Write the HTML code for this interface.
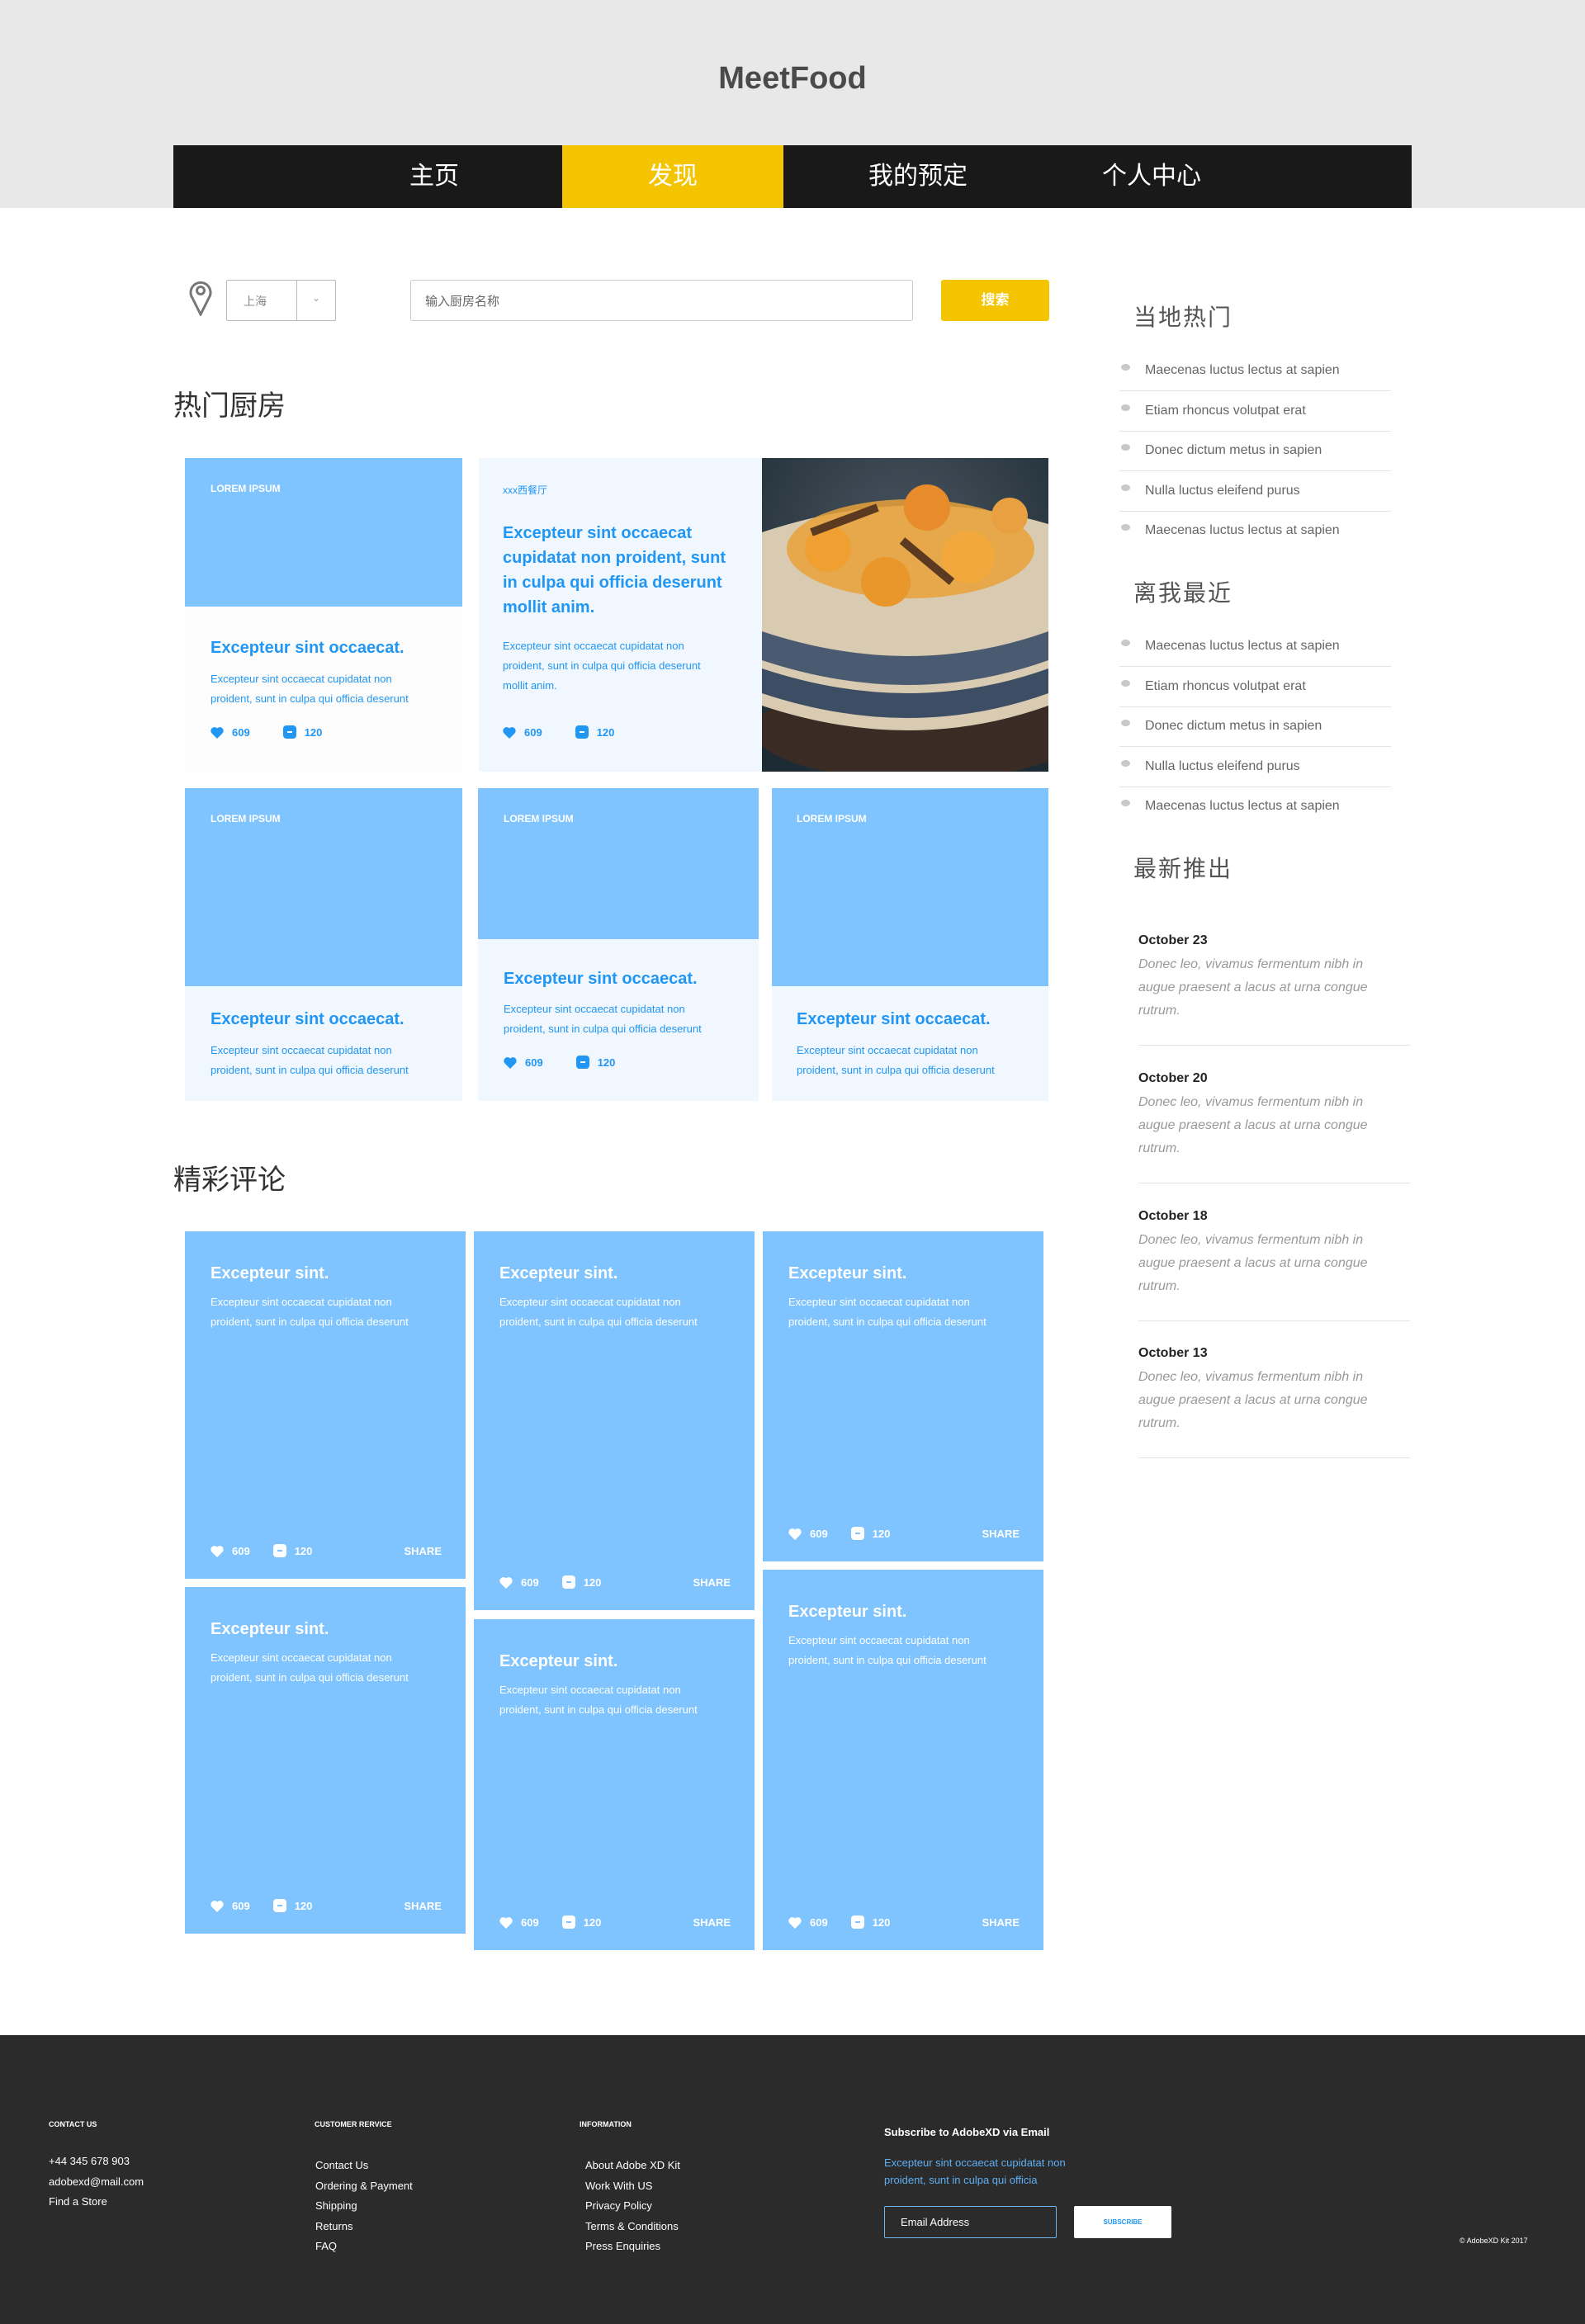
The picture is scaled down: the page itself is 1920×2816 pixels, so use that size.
<!DOCTYPE html>
<html><head><meta charset="utf-8"><style>
*{margin:0;padding:0;box-sizing:border-box}
body{width:1920px;height:2816px;position:relative;background:#fff;font-family:"Liberation Sans","Noto Sans CJK SC",sans-serif;overflow:hidden}
.a{position:absolute}
.hdr{left:0;top:0;width:1920px;height:252px;background:#e8e8e8}
.logo{left:0;width:1920px;top:74px;text-align:center;font-size:38px;font-weight:bold;color:#4a4a4a}
.nav{left:210px;top:176px;width:1500px;height:76px;background:#191919}
.nav span{position:absolute;top:0;height:76px;line-height:76px;color:#fff;font-size:30px;transform:translateX(-50%)}
.h2{font-size:34px;color:#333}
.card{background:#f0f7ff}
.blue{background:#7fc4fe}
.lab{color:#fff;font-size:12px;font-weight:bold}
.t{color:#2196f3;font-size:20px;font-weight:bold}
.d{color:#2196f3;font-size:13px;line-height:24px}
.st{color:#2196f3;font-size:13px;font-weight:bold;display:flex;align-items:center}
.st svg{margin-right:10px}
.rv{background:#7fc4fe}
.rv .t{color:#fff;position:absolute;left:31px;top:40px}
.rv .d{color:#fff;position:absolute;left:31px;top:74px;width:270px}
.rv .st{color:#fff;position:absolute;left:31px;bottom:26px;width:280px}
.rv .sh{margin-left:auto}
.side li{list-style:none;position:absolute;left:1356px;width:329px;height:49px;border-bottom:1px solid #e4e4e4;font-size:16px;color:#666}
.side li::before{content:"";position:absolute;left:2px;top:16px;width:11px;height:8px;border-radius:50%;background:#c8c8c8}
.side li span{position:absolute;left:31px;top:15px}
.news{left:1379px;width:329px;height:136px;border-bottom:1px solid #e4e4e4}
.news b{display:block;font-size:16px;color:#222}
.news i{display:block;font-size:16px;color:#999;line-height:28px;margin-top:6px;width:300px}
.ft{left:0;top:2466px;width:1920px;height:350px;background:#2b2b2b;color:#fff}
.fh{font-size:9px;font-weight:bold}
.fl{font-size:13px;line-height:24.5px}
</style></head><body>
<div class="a hdr"></div>
<div class="a logo">MeetFood</div>
<div class="a nav">
<div class="a" style="left:471px;top:0;width:268px;height:76px;background:#f5c400"></div>
<span style="left:316px">主页</span><span style="left:605px">发现</span><span style="left:902px">我的预定</span><span style="left:1185px">个人中心</span>
</div>

<!-- search -->
<svg class="a" style="left:229px;top:339px" width="28" height="44" viewBox="0 0 28 44"><path d="M14 42 L4 22 A12 12 0 1 1 24 22 Z" fill="none" stroke="#777" stroke-width="3"/><circle cx="14" cy="13" r="4.5" fill="none" stroke="#777" stroke-width="3"/></svg>
<div class="a" style="left:274px;top:339px;width:133px;height:50px;border:1px solid #bbb;border-radius:2px">
<div class="a" style="left:84px;top:0;width:1px;height:48px;background:#bbb"></div>
<span class="a" style="left:20px;top:15px;font-size:14px;color:#888">上海</span>
<span class="a" style="left:103px;top:14px;font-size:12px;color:#999">⌄</span></div>
<div class="a" style="left:497px;top:339px;width:609px;height:50px;border:1px solid #ccc;border-radius:3px"><span class="a" style="left:17px;top:14px;font-size:15px;color:#666">输入厨房名称</span></div>
<div class="a" style="left:1140px;top:339px;width:131px;height:50px;background:#f5c400;border-radius:3px;color:#fff;font-size:17px;font-weight:bold;text-align:center;line-height:50px">搜索</div>

<div class="a h2" style="left:210px;top:464px">热门厨房</div>

<!-- row1 -->
<div class="a" style="left:224px;top:555px;width:336px;height:380px;background:#fcfcfc"></div>
<div class="a blue" style="left:224px;top:555px;width:336px;height:180px"></div>
<div class="a lab" style="left:255px;top:585px">LOREM IPSUM</div>
<div class="a t" style="left:255px;top:774px">Excepteur sint occaecat.</div>
<div class="a d" style="left:255px;top:811px;width:270px">Excepteur sint occaecat cupidatat non proident, sunt in culpa qui officia deserunt</div>
<div class="a st" style="left:255px;top:879px"><svg width="16" height="15" viewBox="0 0 16 15"><path d="M8 15 L1.5 8.5 A4 4 0 0 1 8 2.5 A4 4 0 0 1 14.5 8.5 Z" fill="#2196f3"/></svg>609<svg style="margin-left:40px" width="16" height="16" viewBox="0 0 16 16"><rect width="16" height="16" rx="4" fill="#2196f3"/><rect x="5" y="7" width="6" height="2" fill="#fff"/></svg>120</div>

<div class="a card" style="left:580px;top:555px;width:353px;height:380px"></div>
<div class="a" style="left:609px;top:585px;font-size:12px;color:#2196f3">xxx西餐厅</div>
<div class="a t" style="left:609px;top:631px;width:285px;line-height:30px">Excepteur sint occaecat cupidatat non proident, sunt in culpa qui officia deserunt mollit anim.</div>
<div class="a d" style="left:609px;top:771px;width:270px">Excepteur sint occaecat cupidatat non proident, sunt in culpa qui officia deserunt mollit anim.</div>
<div class="a st" style="left:609px;top:879px"><svg width="16" height="15" viewBox="0 0 16 15"><path d="M8 15 L1.5 8.5 A4 4 0 0 1 8 2.5 A4 4 0 0 1 14.5 8.5 Z" fill="#2196f3"/></svg>609<svg style="margin-left:40px" width="16" height="16" viewBox="0 0 16 16"><rect width="16" height="16" rx="4" fill="#2196f3"/><rect x="5" y="7" width="6" height="2" fill="#fff"/></svg>120</div>

<svg class="a" style="left:923px;top:555px" width="347" height="380" viewBox="0 0 347 380">
<defs><radialGradient id="bg" cx="0.5" cy="0.3" r="0.8"><stop offset="0" stop-color="#4a5560"/><stop offset="1" stop-color="#1b2a33"/></radialGradient></defs>
<rect width="347" height="380" fill="url(#bg)"/>
<ellipse cx="190" cy="330" rx="200" ry="60" fill="#3a2c25"/>
<path d="M0 90 Q180 30 347 80 L347 300 Q180 360 0 300 Z" fill="#d9cbb1"/>
<path d="M0 210 Q180 270 347 210 L347 245 Q180 305 0 245 Z" fill="#4a5a70"/>
<path d="M0 255 Q180 315 347 255 L347 285 Q180 345 0 285 Z" fill="#3d4d63"/>
<ellipse cx="180" cy="110" rx="150" ry="60" fill="#e8a23a" opacity=".85"/>
<circle cx="80" cy="110" r="28" fill="#f0a030"/><circle cx="150" cy="150" r="30" fill="#e9962a"/><circle cx="250" cy="120" r="32" fill="#f2a83c"/><circle cx="200" cy="60" r="28" fill="#e88b2a"/><circle cx="300" cy="70" r="22" fill="#e8a040"/>
<path d="M60 90 L140 60 M170 100 L230 150" stroke="#5c3a22" stroke-width="10"/>
</svg>

<!-- row2 -->
<div class="a card" style="left:224px;top:955px;width:336px;height:379px"></div>
<div class="a blue" style="left:224px;top:955px;width:336px;height:240px"></div>
<div class="a lab" style="left:255px;top:985px">LOREM IPSUM</div>
<div class="a t" style="left:255px;top:1224px">Excepteur sint occaecat.</div>
<div class="a d" style="left:255px;top:1261px;width:270px">Excepteur sint occaecat cupidatat non proident, sunt in culpa qui officia deserunt</div>

<div class="a card" style="left:579px;top:955px;width:340px;height:379px"></div>
<div class="a blue" style="left:579px;top:955px;width:340px;height:183px"></div>
<div class="a lab" style="left:610px;top:985px">LOREM IPSUM</div>
<div class="a t" style="left:610px;top:1175px">Excepteur sint occaecat.</div>
<div class="a d" style="left:610px;top:1211px;width:270px">Excepteur sint occaecat cupidatat non proident, sunt in culpa qui officia deserunt</div>
<div class="a st" style="left:610px;top:1279px"><svg width="16" height="15" viewBox="0 0 16 15"><path d="M8 15 L1.5 8.5 A4 4 0 0 1 8 2.5 A4 4 0 0 1 14.5 8.5 Z" fill="#2196f3"/></svg>609<svg style="margin-left:40px" width="16" height="16" viewBox="0 0 16 16"><rect width="16" height="16" rx="4" fill="#2196f3"/><rect x="5" y="7" width="6" height="2" fill="#fff"/></svg>120</div>

<div class="a card" style="left:935px;top:955px;width:335px;height:379px"></div>
<div class="a blue" style="left:935px;top:955px;width:335px;height:240px"></div>
<div class="a lab" style="left:965px;top:985px">LOREM IPSUM</div>
<div class="a t" style="left:965px;top:1224px">Excepteur sint occaecat.</div>
<div class="a d" style="left:965px;top:1261px;width:270px">Excepteur sint occaecat cupidatat non proident, sunt in culpa qui officia deserunt</div>

<div class="a h2" style="left:210px;top:1402px">精彩评论</div>

<!-- reviews -->
<div class="a rv" style="left:224px;top:1492px;width:340px;height:421px"><div class="t">Excepteur sint.</div><div class="d">Excepteur sint occaecat cupidatat non proident, sunt in culpa qui officia deserunt</div><div class="st"><svg width="16" height="15" viewBox="0 0 16 15"><path d="M8 15 L1.5 8.5 A4 4 0 0 1 8 2.5 A4 4 0 0 1 14.5 8.5 Z" fill="#fff"/></svg>609<svg style="margin-left:28px" width="16" height="16" viewBox="0 0 16 16"><rect width="16" height="16" rx="4" fill="#fff"/><rect x="5" y="7" width="6" height="2" fill="#7fc4fe"/></svg>120<span class="sh">SHARE</span></div></div>
<div class="a rv" style="left:224px;top:1923px;width:340px;height:420px"><div class="t">Excepteur sint.</div><div class="d">Excepteur sint occaecat cupidatat non proident, sunt in culpa qui officia deserunt</div><div class="st"><svg width="16" height="15" viewBox="0 0 16 15"><path d="M8 15 L1.5 8.5 A4 4 0 0 1 8 2.5 A4 4 0 0 1 14.5 8.5 Z" fill="#fff"/></svg>609<svg style="margin-left:28px" width="16" height="16" viewBox="0 0 16 16"><rect width="16" height="16" rx="4" fill="#fff"/><rect x="5" y="7" width="6" height="2" fill="#7fc4fe"/></svg>120<span class="sh">SHARE</span></div></div>
<div class="a rv" style="left:574px;top:1492px;width:340px;height:459px"><div class="t">Excepteur sint.</div><div class="d">Excepteur sint occaecat cupidatat non proident, sunt in culpa qui officia deserunt</div><div class="st"><svg width="16" height="15" viewBox="0 0 16 15"><path d="M8 15 L1.5 8.5 A4 4 0 0 1 8 2.5 A4 4 0 0 1 14.5 8.5 Z" fill="#fff"/></svg>609<svg style="margin-left:28px" width="16" height="16" viewBox="0 0 16 16"><rect width="16" height="16" rx="4" fill="#fff"/><rect x="5" y="7" width="6" height="2" fill="#7fc4fe"/></svg>120<span class="sh">SHARE</span></div></div>
<div class="a rv" style="left:574px;top:1962px;width:340px;height:401px"><div class="t">Excepteur sint.</div><div class="d">Excepteur sint occaecat cupidatat non proident, sunt in culpa qui officia deserunt</div><div class="st"><svg width="16" height="15" viewBox="0 0 16 15"><path d="M8 15 L1.5 8.5 A4 4 0 0 1 8 2.5 A4 4 0 0 1 14.5 8.5 Z" fill="#fff"/></svg>609<svg style="margin-left:28px" width="16" height="16" viewBox="0 0 16 16"><rect width="16" height="16" rx="4" fill="#fff"/><rect x="5" y="7" width="6" height="2" fill="#7fc4fe"/></svg>120<span class="sh">SHARE</span></div></div>
<div class="a rv" style="left:924px;top:1492px;width:340px;height:400px"><div class="t">Excepteur sint.</div><div class="d">Excepteur sint occaecat cupidatat non proident, sunt in culpa qui officia deserunt</div><div class="st"><svg width="16" height="15" viewBox="0 0 16 15"><path d="M8 15 L1.5 8.5 A4 4 0 0 1 8 2.5 A4 4 0 0 1 14.5 8.5 Z" fill="#fff"/></svg>609<svg style="margin-left:28px" width="16" height="16" viewBox="0 0 16 16"><rect width="16" height="16" rx="4" fill="#fff"/><rect x="5" y="7" width="6" height="2" fill="#7fc4fe"/></svg>120<span class="sh">SHARE</span></div></div>
<div class="a rv" style="left:924px;top:1902px;width:340px;height:461px"><div class="t">Excepteur sint.</div><div class="d">Excepteur sint occaecat cupidatat non proident, sunt in culpa qui officia deserunt</div><div class="st"><svg width="16" height="15" viewBox="0 0 16 15"><path d="M8 15 L1.5 8.5 A4 4 0 0 1 8 2.5 A4 4 0 0 1 14.5 8.5 Z" fill="#fff"/></svg>609<svg style="margin-left:28px" width="16" height="16" viewBox="0 0 16 16"><rect width="16" height="16" rx="4" fill="#fff"/><rect x="5" y="7" width="6" height="2" fill="#7fc4fe"/></svg>120<span class="sh">SHARE</span></div></div>

<!-- sidebar -->
<div class="a" style="left:1373px;top:363px;font-size:28px;color:#555;letter-spacing:2px">当地热门</div>
<ul class="side">
<li style="top:425px"><span>Maecenas luctus lectus at sapien</span></li>
<li style="top:474px"><span>Etiam rhoncus volutpat erat</span></li>
<li style="top:522px"><span>Donec dictum metus in sapien</span></li>
<li style="top:571px"><span>Nulla luctus eleifend purus</span></li>
<li style="top:619px;border:none"><span>Maecenas luctus lectus at sapien</span></li>
</ul>
<div class="a" style="left:1373px;top:697px;font-size:28px;color:#555;letter-spacing:2px">离我最近</div>
<ul class="side">
<li style="top:759px"><span>Maecenas luctus lectus at sapien</span></li>
<li style="top:808px"><span>Etiam rhoncus volutpat erat</span></li>
<li style="top:856px"><span>Donec dictum metus in sapien</span></li>
<li style="top:905px"><span>Nulla luctus eleifend purus</span></li>
<li style="top:953px;border:none"><span>Maecenas luctus lectus at sapien</span></li>
</ul>
<div class="a" style="left:1373px;top:1031px;font-size:28px;color:#555;letter-spacing:2px">最新推出</div>
<div class="a news" style="top:1131px"><b>October 23</b><i>Donec leo, vivamus fermentum nibh in augue praesent a lacus at urna congue rutrum.</i></div>
<div class="a news" style="top:1298px"><b>October 20</b><i>Donec leo, vivamus fermentum nibh in augue praesent a lacus at urna congue rutrum.</i></div>
<div class="a news" style="top:1465px"><b>October 18</b><i>Donec leo, vivamus fermentum nibh in augue praesent a lacus at urna congue rutrum.</i></div>
<div class="a news" style="top:1631px"><b>October 13</b><i>Donec leo, vivamus fermentum nibh in augue praesent a lacus at urna congue rutrum.</i></div>

<!-- footer -->
<div class="a ft">
<div class="a fh" style="left:59px;top:103px">CONTACT US</div>
<div class="a fl" style="left:59px;top:141px">+44 345 678 903<br>adobexd@mail.com<br>Find a Store</div>
<div class="a fh" style="left:381px;top:103px">CUSTOMER RERVICE</div>
<div class="a fl" style="left:382px;top:146px">Contact Us<br>Ordering &amp; Payment<br>Shipping<br>Returns<br>FAQ</div>
<div class="a fh" style="left:702px;top:103px">INFORMATION</div>
<div class="a fl" style="left:709px;top:146px">About Adobe XD Kit<br>Work With US<br>Privacy Policy<br>Terms &amp; Conditions<br>Press Enquiries</div>
<div class="a" style="left:1071px;top:110px;font-size:13px;font-weight:bold">Subscribe to AdobeXD via Email</div>
<div class="a" style="left:1071px;top:144px;font-size:13px;line-height:21px;color:#5eb0f5">Excepteur sint occaecat cupidatat non<br>proident, sunt in culpa qui officia</div>
<div class="a" style="left:1071px;top:207px;width:209px;height:39px;border:1px solid #6fb5ee;border-radius:2px;font-size:13px;line-height:37px;padding-left:19px">Email Address</div>
<div class="a" style="left:1301px;top:207px;width:118px;height:39px;background:#fff;border-radius:2px;color:#2196f3;font-size:8px;font-weight:bold;text-align:center;line-height:39px">SUBSCRIBE</div>
<div class="a" style="left:1768px;top:244px;font-size:9px">© AdobeXD Kit 2017</div>
</div>
</body></html>
